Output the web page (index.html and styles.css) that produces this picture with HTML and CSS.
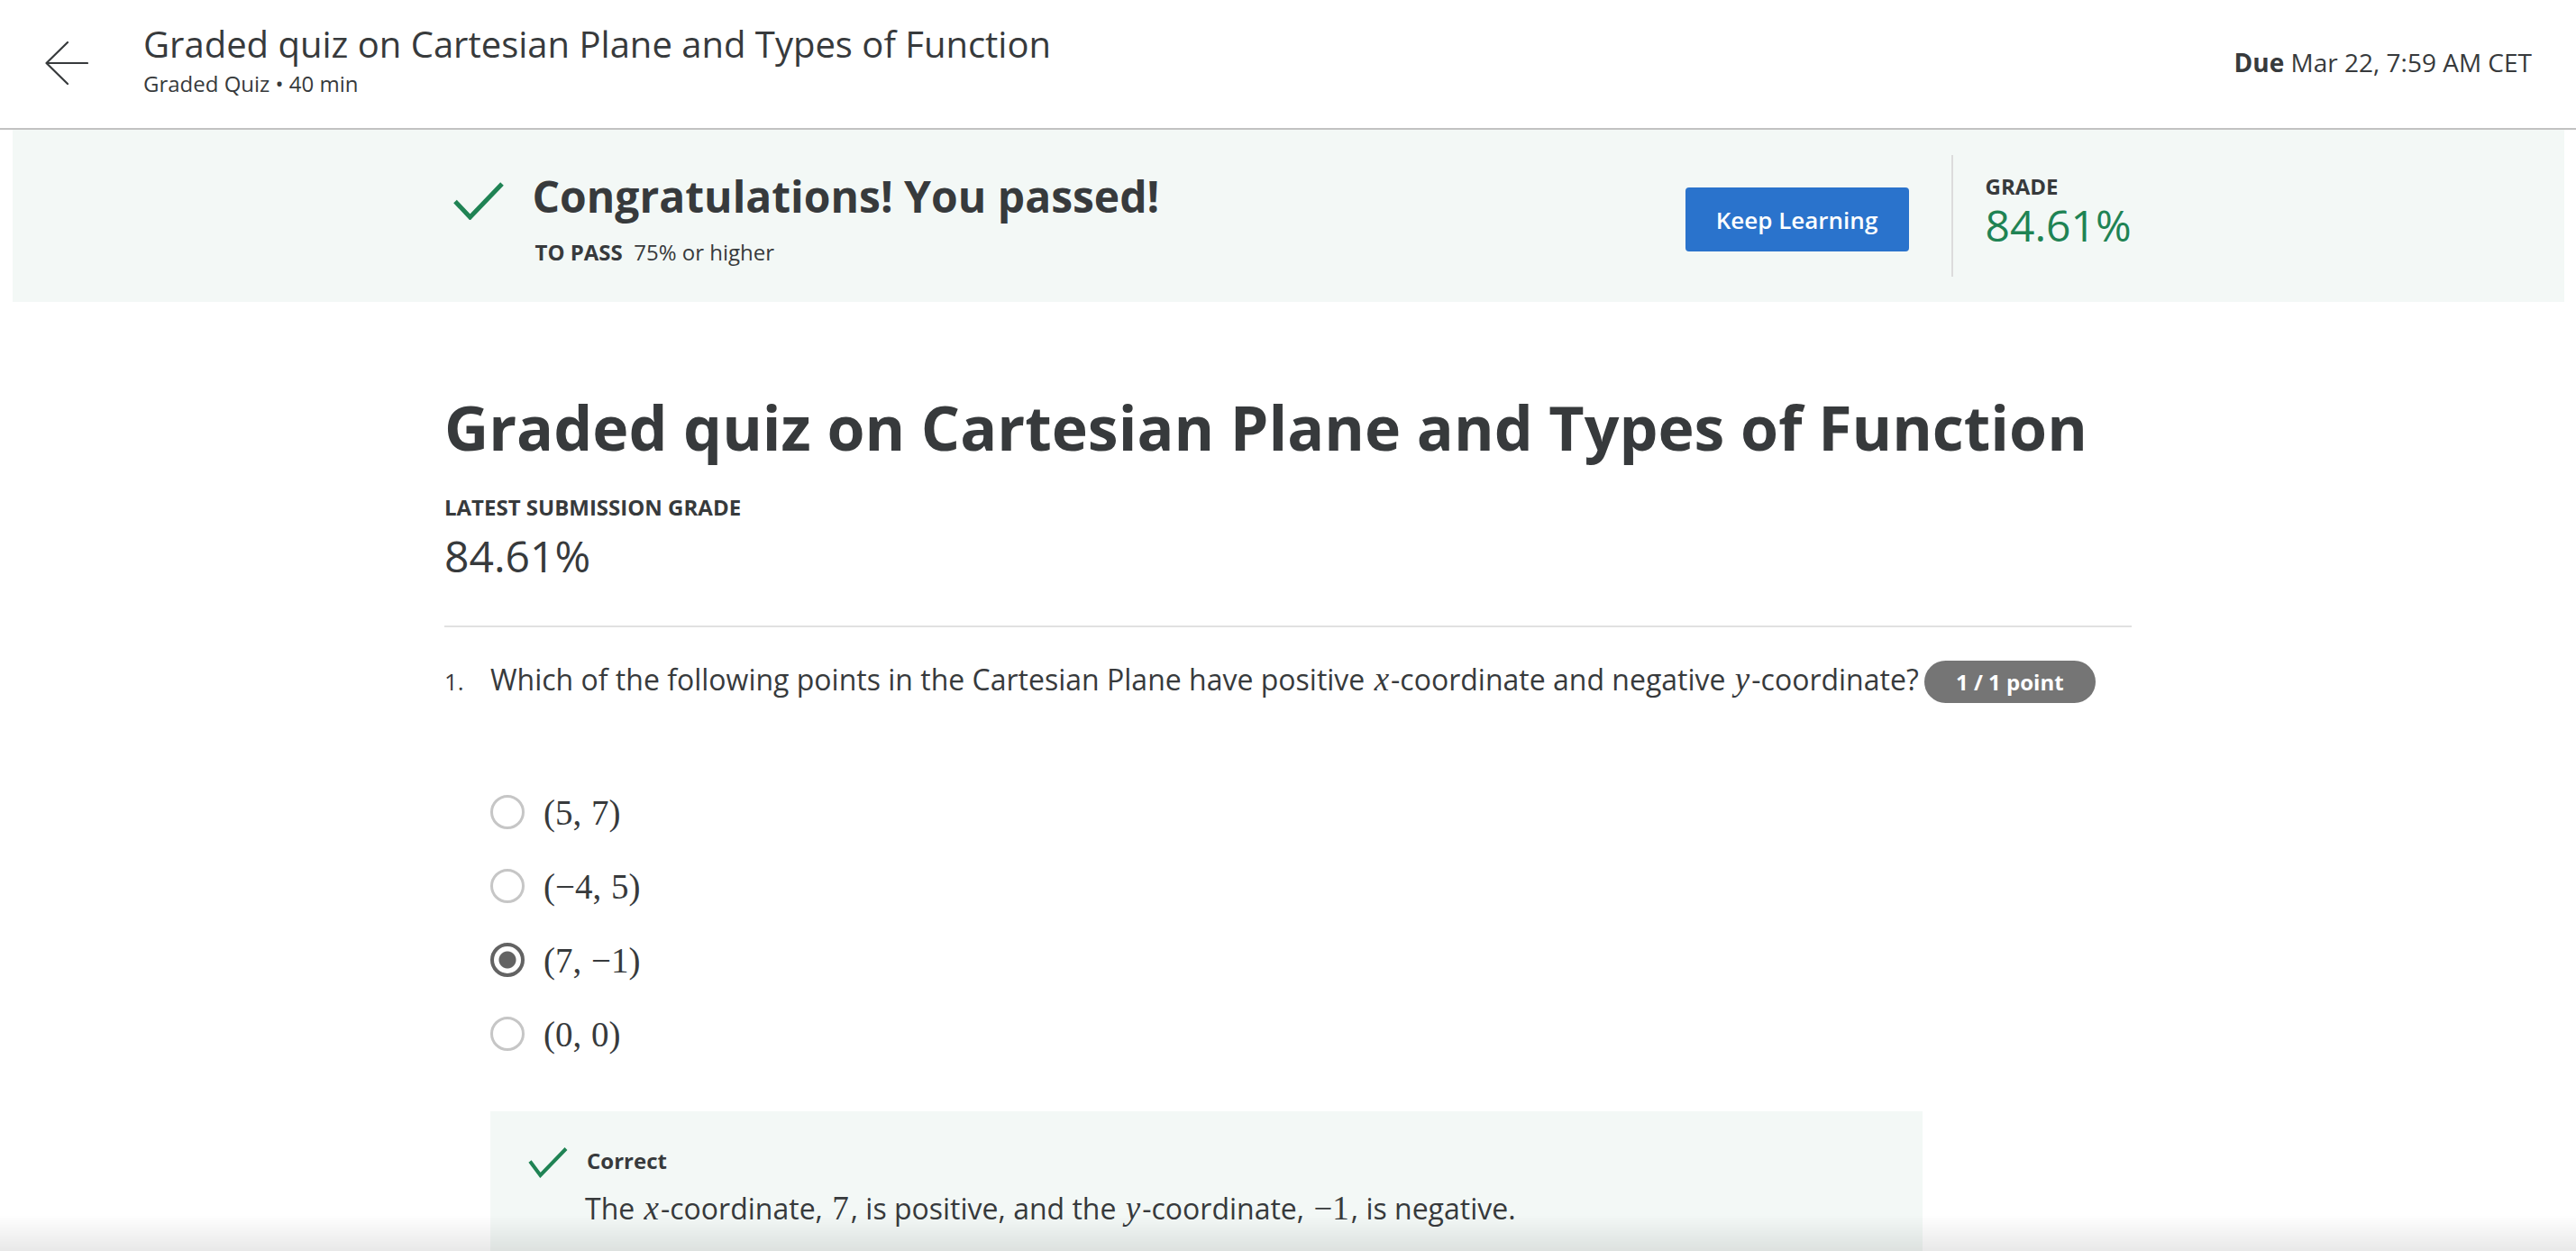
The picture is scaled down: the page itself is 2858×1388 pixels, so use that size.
FILE: index.html
```html
<!DOCTYPE html>
<html lang="en">
<head>
<meta charset="utf-8">
<title>Graded quiz on Cartesian Plane and Types of Function</title>
<link rel="stylesheet" href="styles.css">
</head>
<body>
<header class="topbar">
  <div class="topbar-left">
    <button class="back" aria-label="Back">
      <svg width="48" height="48" viewBox="0 0 48 48" fill="none" stroke="#373a3c" stroke-width="2.2" stroke-linecap="round" stroke-linejoin="round"><path d="M47 24H1.5M25 1L1.5 24L25 47"/></svg>
    </button>
    <div class="titles">
      <div class="title">Graded quiz on Cartesian Plane and Types of Function</div>
      <div class="subtitle">Graded Quiz • 40 min</div>
    </div>
  </div>
  <div class="due"><b>Due</b> Mar 22, 7:59 AM CET</div>
</header>

<section class="banner">
  <div class="banner-inner">
    <div class="pass">
      <svg class="pass-check" width="56" height="42" viewBox="0 0 56 42" fill="none" stroke="#1f8354" stroke-width="5"><path d="M2 21.5L18.5 39L54 2"/></svg>
      <div class="pass-text">
        <h2 class="pass-title">Congratulations! You passed!</h2>
        <div class="to-pass"><b>TO PASS</b>&nbsp; 75% or higher</div>
      </div>
    </div>
    <div class="banner-right">
      <button class="keep">Keep Learning</button>
      <div class="divider"></div>
      <div class="grade">
        <div class="grade-label">GRADE</div>
        <div class="grade-value">84.61%</div>
      </div>
    </div>
  </div>
</section>

<main class="content">
  <h1 class="quiz-title">Graded quiz on Cartesian Plane and Types of Function</h1>
  <div class="latest-label">LATEST SUBMISSION GRADE</div>
  <div class="latest-value">84.61%</div>
  <hr class="rule">

  <div class="question">
    <div class="qnum">1.</div>
    <div class="qbody">
      <div class="qtext">Which of the following points in the Cartesian Plane have positive <span class="mi">x</span>-coordinate and negative <span class="mi">y</span>-coordinate?</div>
      <ul class="options">
        <li class="option"><span class="radio"></span><span class="math">(5, 7)</span></li>
        <li class="option"><span class="radio"></span><span class="math">(−4, 5)</span></li>
        <li class="option"><span class="radio checked"></span><span class="math">(7, −1)</span></li>
        <li class="option"><span class="radio"></span><span class="math">(0, 0)</span></li>
      </ul>
      <div class="feedback">
        <svg class="fb-check" width="44" height="34" viewBox="0 0 44 34" fill="none" stroke="#1f8354" stroke-width="4"><path d="M2 15.5L13.5 31L42 1.5"/></svg>
        <div class="fb-text">
          <div class="fb-title">Correct</div>
          <div class="fb-body">The <span class="mi">x</span>-coordinate, <span class="mn">7</span>, is positive, and the <span class="mi">y</span>-coordinate, <span class="mn">−1</span>, is negative.</div>
        </div>
      </div>
    </div>
    <div class="badge">1 / 1 point</div>
  </div>
</main>

<div class="bottom-shade"></div>
</body>
</html>
```

FILE: styles.css
```css
* { box-sizing: border-box; }

body {
  margin: 0;
  font-family: "Open Sans", "Noto Sans", sans-serif;
  color: #373a3c;
  background: #ffffff;
}

/* ---------- top bar ---------- */
.topbar {
  height: 144px;
  border-bottom: 2px solid #c2c2c2;
  display: flex;
  justify-content: space-between;
  align-items: flex-start;
  padding: 0 49px 0 50px;
}

.topbar-left {
  display: flex;
  align-items: flex-start;
}

.back {
  margin-top: 46px;
  width: 48px;
  height: 48px;
  padding: 0;
  border: 0;
  background: none;
  display: flex;
}

.titles {
  margin-left: 61px;
  padding-top: 24px;
}

.title {
  font-size: 40px;
  line-height: 50px;
  color: #373a3c;
}

.subtitle {
  margin-top: 3px;
  font-size: 24px;
  line-height: 32px;
  color: #373a3c;
}

.due {
  padding-top: 49px;
  font-size: 28px;
  line-height: 40px;
  color: #373a3c;
}

.due b { font-weight: 700; }

/* ---------- banner ---------- */
.banner {
  margin: 0 13px 0 14px;
  height: 191px;
  background: #f3f8f6;
}

.banner-inner {
  width: 1872px;
  height: 100%;
  margin: 0 auto;
  display: flex;
  justify-content: space-between;
  align-items: center;
}

.pass {
  display: flex;
  align-items: flex-start;
  padding-left: 9px;
  padding-top: 5px;
}

.pass-check {
  margin-top: 13px;
}

.pass-text {
  margin-left: 32px;
}

.pass-title {
  margin: 0;
  font-size: 48px;
  line-height: 58px;
  font-weight: 700;
  color: #373a3c;
}

.to-pass {
  margin-top: 18px;
  font-size: 24px;
  line-height: 30px;
  padding-left: 3px;
}

.to-pass b { font-weight: 700; }

.banner-right {
  display: flex;
  align-items: center;
}

.keep {
  width: 248px;
  height: 71px;
  border: 0;
  border-radius: 4px;
  background: #2a73cc;
  color: #ffffff;
  font-family: "Open Sans", sans-serif;
  font-size: 26px;
  font-weight: 600;
  margin-top: 8px;
}

.divider {
  width: 2px;
  height: 135px;
  background: #dcdcdc;
  margin: 0 36px 0 47px;
}

.grade {
  width: 163px;
  padding-bottom: 10px;
}

.grade-label {
  font-size: 24px;
  line-height: 30px;
  font-weight: 700;
}

.grade-value {
  font-size: 48px;
  line-height: 56px;
  color: #1f8354;
}

/* ---------- main ---------- */
.content {
  width: 1872px;
  margin: 0 auto;
}

.quiz-title {
  margin: 97px 0 0;
  font-size: 68px;
  line-height: 84px;
  font-weight: 700;
  color: #373a3c;
}

.latest-label {
  margin-top: 32px;
  font-size: 24px;
  line-height: 30px;
  font-weight: 700;
}

.latest-value {
  margin-top: 11px;
  font-size: 48px;
  line-height: 56px;
}

.rule {
  margin: 49px 0 0;
  border: 0;
  height: 2px;
  background: #e1e1e1;
}

.question {
  margin-top: 37px;
  display: flex;
  align-items: baseline;
}

.qnum {
  width: 51px;
  flex: none;
  font-size: 26px;
  line-height: 42px;
}

.qbody {
  width: 1589px;
  flex: none;
}

.qtext {
  font-size: 32px;
  line-height: 42px;
  white-space: nowrap;
}

.mi {
  font-family: "Liberation Serif", "Times New Roman", serif;
  font-style: italic;
  font-size: 37px;
  margin: 0 2px;
}

.mn {
  font-family: "Liberation Serif", "Times New Roman", serif;
  font-size: 37px;
  margin: 0 2px;
}

.badge {
  flex: none;
  height: 47px;
  padding: 0 35px;
  border-radius: 24px;
  background: #757575;
  color: #ffffff;
  font-size: 24px;
  font-weight: 700;
  line-height: 47px;
  margin-left: 2px;
}

.options {
  list-style: none;
  margin: 85px 0 0;
  padding: 0;
}

.option {
  height: 82px;
  display: flex;
  align-items: center;
}

.radio {
  width: 38px;
  height: 38px;
  border-radius: 50%;
  border: 3px solid #c6c6c6;
  flex: none;
}

.radio.checked {
  border: 4px solid #636363;
  background: radial-gradient(circle, #636363 0 9px, #ffffff 10px);
}

.math {
  margin-left: 21px;
  font-family: "Liberation Serif", "Times New Roman", serif;
  font-size: 39px;
  color: #373a3c;
  word-spacing: 1px;
}

.feedback {
  margin-top: 45px;
  background: #f3f8f6;
  padding: 40px 42px 40px;
  display: flex;
  align-items: flex-start;
}

.fb-check {
  flex: none;
}

.fb-text {
  margin-left: 21px;
}

.fb-title {
  font-size: 24px;
  line-height: 30px;
  font-weight: 700;
}

.fb-body {
  margin-top: 17px;
  margin-left: -2px;
  font-size: 32px;
  line-height: 42px;
}

/* bottom fade overlaying the viewport edge */
.bottom-shade {
  position: fixed;
  left: 0;
  right: 0;
  bottom: 0;
  height: 40px;
  background: linear-gradient(to bottom, rgba(0,0,0,0), rgba(0,0,0,0.09));
  pointer-events: none;
}
```
